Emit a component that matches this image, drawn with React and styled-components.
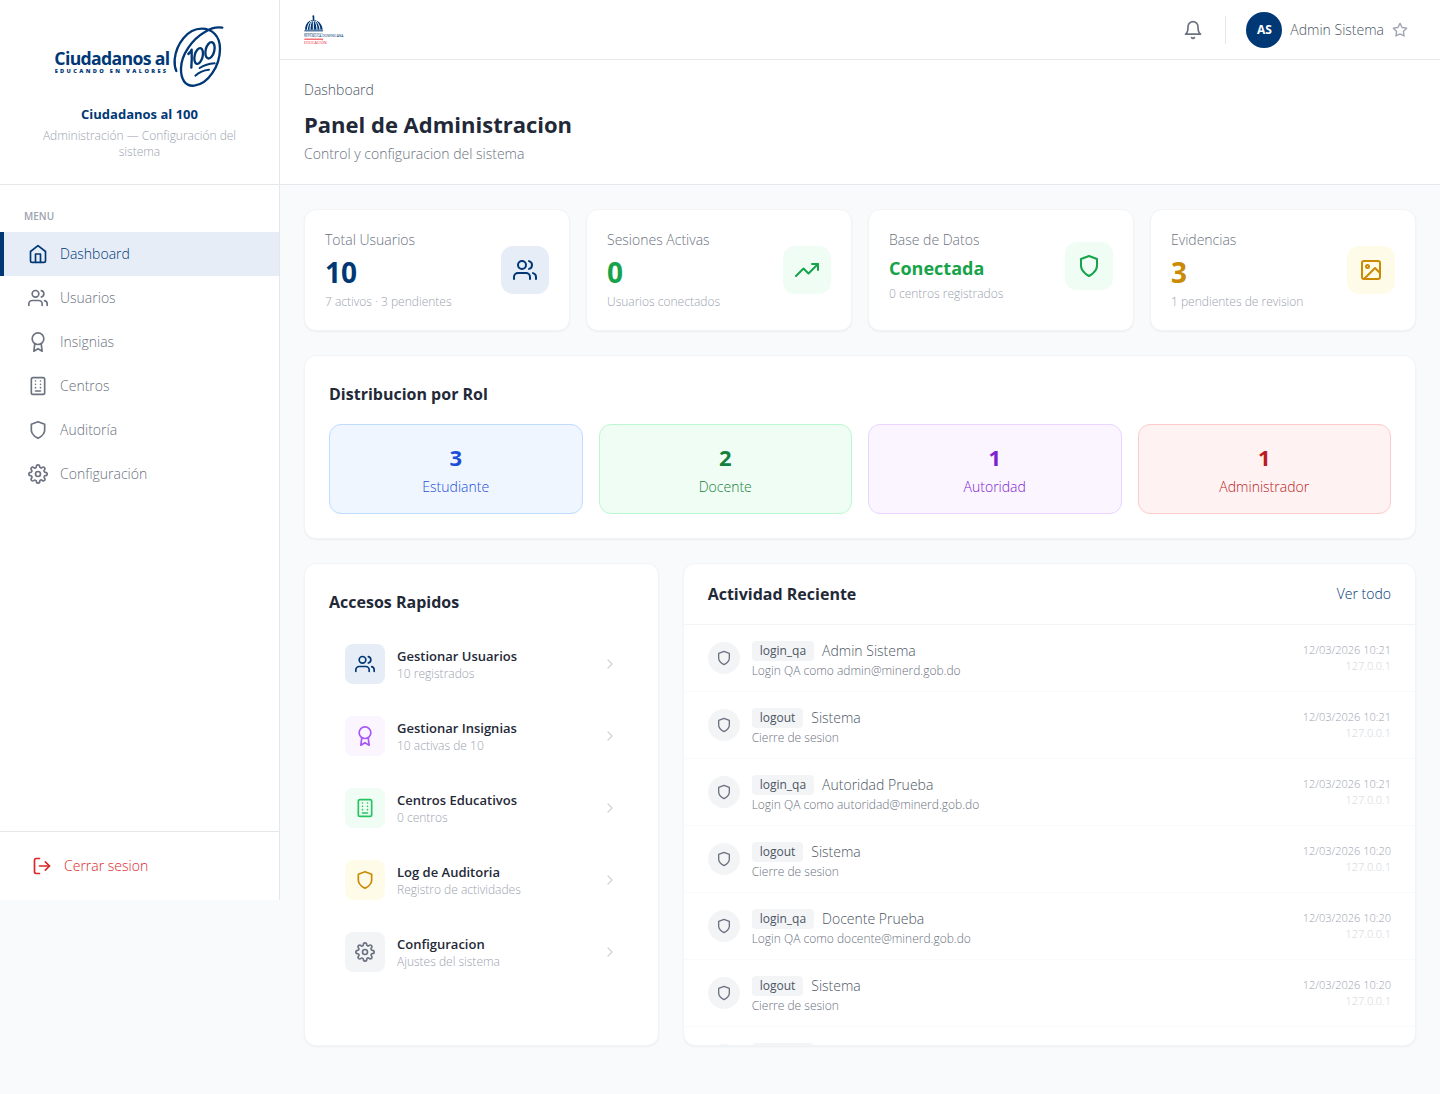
import React from "react";
import styled, { createGlobalStyle } from "styled-components";
import {
  FiAward,
  FiBell,
  FiChevronRight,
  FiHome,
  FiImage,
  FiLogOut,
  FiSettings,
  FiShield,
  FiStar,
  FiTrendingUp,
  FiUsers,
} from "react-icons/fi";

const navy = "#003876";
const line = "#e5e7eb";
const softLine = "#f3f4f6";
const gray300 = "#d1d5db";
const gray400 = "#9ca3af";
const gray500 = "#6b7280";
const gray600 = "#4b5563";
const gray800 = "#1f2937";

const tones = {
  navy: { fg: navy, bg: "#e6edf7" },
  green: { fg: "#16a34a", bg: "#f0fdf4" },
  lime: { fg: "#22c55e", bg: "#f0fdf4" },
  amber: { fg: "#ca8a04", bg: "#fefce8" },
  purple: { fg: "#a855f7", bg: "#faf5ff" },
  gray: { fg: gray500, bg: "#f3f4f6" },
};

const GlobalStyle = createGlobalStyle`
  *, *::before, *::after { box-sizing: border-box; }
  body {
    margin: 0;
    background: #f9fafb;
    color: ${gray800};
    font-family: "Open Sans", "Noto Sans", sans-serif;
    font-size: 14px;
    font-weight: 300;
    line-height: 20px;
  }
  h1, h2, h3, p, ul, dl, dd { margin: 0; padding: 0; }
  ul { list-style: none; }
  a { color: inherit; text-decoration: none; }
  button {
    border: 0;
    background: none;
    color: inherit;
    font: inherit;
    cursor: pointer;
  }
  svg { display: block; flex-shrink: 0; }
`;

const Shell = styled.div`
  display: flex;
  align-items: flex-start;
`;

const Sidebar = styled.aside`
  position: sticky;
  top: 0;
  display: flex;
  flex-direction: column;
  flex-shrink: 0;
  width: 280px;
  height: 900px;
  background: #fff;
  border-right: 1px solid ${line};
`;

const Brand = styled.div`
  display: flex;
  flex-direction: column;
  align-items: center;
  padding: 24px;
  border-bottom: 1px solid ${line};
  text-align: center;
`;

const BrandName = styled.p`
  margin-top: 16px;
  color: ${navy};
  font-size: 13px;
  font-weight: 700;
`;

const BrandNote = styled.p`
  margin-top: 4px;
  color: ${gray400};
  font-size: 12px;
  line-height: 16px;
`;

const Nav = styled.nav`
  flex: 1;
  padding-top: 24px;
`;

const NavTitle = styled.p`
  padding: 0 24px 8px;
  color: ${gray400};
  font-size: 10px;
  font-weight: 600;
  line-height: 15px;
`;

const NavLink = styled.a`
  display: flex;
  align-items: center;
  gap: 12px;
  height: 44px;
  padding: 0 24px;
  border-left: 4px solid ${(p) => (p.$active ? navy : "transparent")};
  background: ${(p) => (p.$active ? "#e6edf7" : "transparent")};
  color: ${(p) => (p.$active ? navy : gray500)};
`;

const SidebarFooter = styled.div`
  padding: 16px;
  border-top: 1px solid ${line};
`;

const LogoutButton = styled.button`
  display: flex;
  align-items: center;
  gap: 12px;
  width: 100%;
  padding: 8px 16px;
  color: #dc2626;
`;

const Content = styled.div`
  flex: 1;
  min-width: 0;
`;

const TopBar = styled.header`
  display: flex;
  align-items: center;
  justify-content: space-between;
  height: 60px;
  padding: 0 24px;
  background: #fff;
  border-bottom: 1px solid ${line};
`;

const TopActions = styled.div`
  display: flex;
  align-items: center;
  gap: 12px;
`;

const IconButton = styled.button`
  padding: 10px;
  color: ${gray500};
`;

const Divider = styled.span`
  width: 1px;
  height: 28px;
  background: ${line};
`;

const UserButton = styled.button`
  display: flex;
  align-items: center;
  gap: 8px;
  padding: 0 8px;
  color: ${gray600};

  svg { color: ${gray400}; }
`;

const Avatar = styled.span`
  display: grid;
  place-items: center;
  width: 36px;
  height: 36px;
  border-radius: 50%;
  background: ${navy};
  color: #fff;
  font-size: 12px;
  font-weight: 700;
`;

const PageHeader = styled.section`
  padding: 20px 24px;
  background: #fff;
  border-bottom: 1px solid ${line};
`;

const Crumb = styled.p`
  color: ${gray600};
`;

const PageTitle = styled.h1`
  margin-top: 8px;
  font-size: 22px;
  font-weight: 700;
  line-height: 32px;
`;

const PageNote = styled.p`
  margin-top: 4px;
  color: ${gray500};
`;

const Main = styled.main`
  display: flex;
  flex-direction: column;
  gap: 24px;
  padding: 24px 24px 48px;
`;

const Card = styled.section`
  background: #fff;
  border: 1px solid ${softLine};
  border-radius: 12px;
  box-shadow: 0 1px 2px rgba(0, 0, 0, 0.05);
`;

const StatGrid = styled.div`
  display: grid;
  grid-template-columns: repeat(4, 1fr);
  gap: 16px;
`;

const StatCard = styled(Card)`
  padding: 20px;
`;

const StatBody = styled.div`
  display: flex;
  align-items: center;
  justify-content: space-between;
`;

const StatLabel = styled.p`
  color: ${gray500};
`;

const StatValue = styled.p`
  margin-top: 4px;
  color: ${(p) => tones[p.$tone].fg};
  font-size: ${(p) => (p.$word ? 18 : 28)}px;
  font-weight: 700;
  line-height: ${(p) => (p.$word ? 28 : 36)}px;
`;

const StatNote = styled.p`
  margin-top: 4px;
  color: ${gray400};
  font-size: 12px;
  line-height: 16px;
`;

const IconTile = styled.span`
  display: grid;
  place-items: center;
  flex-shrink: 0;
  width: ${(p) => (p.$large ? 48 : 40)}px;
  height: ${(p) => (p.$large ? 48 : 40)}px;
  border-radius: ${(p) => (p.$large ? 12 : 8)}px;
  background: ${(p) => tones[p.$tone].bg};
  color: ${(p) => tones[p.$tone].fg};
`;

const PaddedCard = styled(Card)`
  padding: 24px;
`;

const CardTitle = styled.h2`
  font-size: 16px;
  font-weight: 700;
  line-height: 28px;
`;

const RoleGrid = styled.div`
  display: grid;
  grid-template-columns: repeat(4, 1fr);
  gap: 16px;
  margin-top: 16px;
`;

const RoleBox = styled.div`
  padding: 16px;
  border: 1px solid ${(p) => p.$edge};
  border-radius: 12px;
  background: ${(p) => p.$fill};
  color: ${(p) => p.$ink};
  text-align: center;
`;

const RoleCount = styled.p`
  font-size: 22px;
  font-weight: 700;
  line-height: 32px;
`;

const RoleName = styled.p`
  margin-top: 4px;
`;

const LowerGrid = styled.div`
  display: grid;
  grid-template-columns: repeat(3, 1fr);
  gap: 24px;
`;

const ShortcutList = styled.ul`
  display: flex;
  flex-direction: column;
  gap: 8px;
  margin-top: 16px;
`;

const Shortcut = styled.a`
  display: flex;
  align-items: center;
  gap: 12px;
  padding: 12px 16px;

  > svg { color: ${gray300}; }
`;

const ShortcutText = styled.span`
  display: flex;
  flex: 1;
  flex-direction: column;
`;

const ShortcutName = styled.span`
  font-size: 13px;
  font-weight: 600;
`;

const ShortcutNote = styled.span`
  color: ${gray400};
  font-size: 12px;
  line-height: 16px;
`;

const ActivityCard = styled(Card)`
  grid-column: span 2;
  overflow: hidden;
`;

const ActivityHead = styled.div`
  display: flex;
  align-items: center;
  justify-content: space-between;
  padding: 16px 24px;
  border-bottom: 1px solid ${softLine};
`;

const SeeAll = styled.a`
  color: ${navy};
`;

const ActivityList = styled.ul`
  max-height: 420px;
  overflow-y: auto;
  scrollbar-width: none;
`;

const ActivityRow = styled.li`
  display: flex;
  align-items: center;
  gap: 12px;
  padding: 12px 24px;
  border-bottom: 1px solid #f9fafb;
`;

const RoundIcon = styled.span`
  display: grid;
  place-items: center;
  flex-shrink: 0;
  width: 32px;
  height: 32px;
  border-radius: 50%;
  background: #f3f4f6;
  color: ${gray500};
`;

const ActivityText = styled.div`
  flex: 1;
  min-width: 0;
`;

const ActivityTop = styled.p`
  display: flex;
  align-items: center;
  gap: 8px;
  padding-top: 4px;
  color: ${gray600};
`;

const Tag = styled.span`
  padding: 2px 8px;
  border-radius: 4px;
  background: #f3f4f6;
  font-size: 12px;
  font-weight: 400;
  line-height: 16px;
`;

const ActivityNote = styled.p`
  margin-top: 2px;
  color: ${gray500};
  font-size: 12px;
  line-height: 16px;
`;

const ActivityMeta = styled.div`
  color: ${gray400};
  font-size: 11px;
  line-height: 16px;
  text-align: right;
`;

const Address = styled.p`
  color: ${gray300};
`;

function FiBuilding({ size = 20 }) {
  return (
    <svg
      width={size}
      height={size}
      viewBox="0 0 24 24"
      fill="none"
      stroke="currentColor"
      strokeWidth="2"
      strokeLinecap="round"
      strokeLinejoin="round"
      aria-hidden="true"
    >
      <rect x="4" y="2" width="16" height="20" rx="2" />
      <path d="M9 6h.01M15 6h.01M9 10h.01M15 10h.01M9 14h.01M15 14h.01M9 18h6" />
    </svg>
  );
}

function BrandLogo() {
  return (
    <svg width="170" height="64" viewBox="162 72 510 192" role="img" aria-label="Ciudadanos al 100">
      <g fill={navy} fontFamily="Open Sans, sans-serif" fontWeight="700">
        <text x="160" y="195" fontSize="53" letterSpacing="-2">
          Ciudadanos al
        </text>
        <text x="161" y="218" fontSize="17" fontWeight="800" letterSpacing="7">
          EDUCANDO EN VALORES
        </text>
      </g>
      <g fill="none" stroke={navy} strokeLinecap="round" strokeLinejoin="round">
        <path
          strokeWidth="7"
          d="M664 83C646 80 629 85 613 95C572 118 541 165 540 205C539 238 553 260 580 257C622 252 657 197 657 146C657 109 634 86 602 86C559 86 526 132 521 178C520 193 522 204 526 213"
        />
        <path strokeWidth="7" d="M562 162Q569 156 572 149Q573 176 571 203" />
        <ellipse cx="593" cy="168" rx="12" ry="24" strokeWidth="7" transform="rotate(14 593 168)" />
        <ellipse cx="627" cy="151" rx="13" ry="25" strokeWidth="7" transform="rotate(14 627 151)" />
        <path strokeWidth="6" d="M596 204Q615 192 641 190M583 227Q600 211 624 209" />
      </g>
    </svg>
  );
}

function MinistryLogo() {
  return (
    <svg width="42" height="32" viewBox="74 40 126 96" role="img" aria-label="Educación">
      <g fill={navy}>
        <circle cx="102" cy="47" r="3" />
        <rect x="100" y="49" width="5" height="9" />
        <path d="M77 87C78 69 88 58 102 58S128 69 130 87Z" />
        <rect x="75" y="89" width="56" height="3" />
      </g>
      <path
        d="M84 87C85 76 88 67 95 61M92 87C92 76 94 67 99 60M102 87V61M113 87C113 76 110 67 106 60M122 87C121 76 117 67 110 61"
        fill="none"
        stroke="#fff"
        strokeWidth="3"
      />
      <g fontFamily="Open Sans, sans-serif" fontWeight="400">
        <text x="74" y="101" fontSize="7" fill={navy}>
          GOBIERNO DE LA
        </text>
        <text x="74" y="110" fontSize="10" fill={navy}>
          REPÚBLICA DOMINICANA
        </text>
        <text x="74" y="131" fontSize="12" fill="#ee2a35">
          EDUCACIÓN
        </text>
      </g>
      <rect x="75" y="114" width="56" height="3" fill="#ee2a35" />
    </svg>
  );
}

const menu = [
  { label: "Dashboard", Icon: FiHome, active: true },
  { label: "Usuarios", Icon: FiUsers },
  { label: "Insignias", Icon: FiAward },
  { label: "Centros", Icon: FiBuilding },
  { label: "Auditoría", Icon: FiShield },
  { label: "Configuración", Icon: FiSettings },
];

const stats = [
  { label: "Total Usuarios", value: "10", note: "7 activos · 3 pendientes", tone: "navy", Icon: FiUsers },
  { label: "Sesiones Activas", value: "0", note: "Usuarios conectados", tone: "green", Icon: FiTrendingUp },
  { label: "Base de Datos", value: "Conectada", note: "0 centros registrados", tone: "green", Icon: FiShield, word: true },
  { label: "Evidencias", value: "3", note: "1 pendientes de revision", tone: "amber", Icon: FiImage },
];

const roles = [
  { name: "Estudiante", count: 3, ink: "#1d4ed8", fill: "#eff6ff", edge: "#bfdbfe" },
  { name: "Docente", count: 2, ink: "#15803d", fill: "#f0fdf4", edge: "#bbf7d0" },
  { name: "Autoridad", count: 1, ink: "#7e22ce", fill: "#faf5ff", edge: "#e9d5ff" },
  { name: "Administrador", count: 1, ink: "#b91c1c", fill: "#fef2f2", edge: "#fecaca" },
];

const shortcuts = [
  { name: "Gestionar Usuarios", note: "10 registrados", tone: "navy", Icon: FiUsers },
  { name: "Gestionar Insignias", note: "10 activas de 10", tone: "purple", Icon: FiAward },
  { name: "Centros Educativos", note: "0 centros", tone: "lime", Icon: FiBuilding },
  { name: "Log de Auditoria", note: "Registro de actividades", tone: "amber", Icon: FiShield },
  { name: "Configuracion", note: "Ajustes del sistema", tone: "gray", Icon: FiSettings },
];

const activity = [
  { tag: "login_qa", who: "Admin Sistema", note: "Login QA como admin@minerd.gob.do", time: "12/03/2026 10:21" },
  { tag: "logout", who: "Sistema", note: "Cierre de sesion", time: "12/03/2026 10:21" },
  { tag: "login_qa", who: "Autoridad Prueba", note: "Login QA como autoridad@minerd.gob.do", time: "12/03/2026 10:21" },
  { tag: "logout", who: "Sistema", note: "Cierre de sesion", time: "12/03/2026 10:20" },
  { tag: "login_qa", who: "Docente Prueba", note: "Login QA como docente@minerd.gob.do", time: "12/03/2026 10:20" },
  { tag: "logout", who: "Sistema", note: "Cierre de sesion", time: "12/03/2026 10:20" },
  { tag: "login_qa", who: "", note: "\u00a0", time: "" },
];

export default function App() {
  return (
    <>
      <GlobalStyle />
      <Shell>
        <Sidebar>
          <Brand>
            <BrandLogo />
            <BrandName>Ciudadanos al 100</BrandName>
            <BrandNote>Administración — Configuración del sistema</BrandNote>
          </Brand>
          <Nav>
            <NavTitle>MENU</NavTitle>
            <ul>
              {menu.map(({ label, Icon, active }) => (
                <li key={label}>
                  <NavLink href="#" $active={active} aria-current={active ? "page" : undefined}>
                    <Icon size={20} />
                    {label}
                  </NavLink>
                </li>
              ))}
            </ul>
          </Nav>
          <SidebarFooter>
            <LogoutButton type="button">
              <FiLogOut size={20} />
              Cerrar sesion
            </LogoutButton>
          </SidebarFooter>
        </Sidebar>

        <Content>
          <TopBar>
            <MinistryLogo />
            <TopActions>
              <IconButton type="button" aria-label="Notificaciones">
                <FiBell size={20} />
              </IconButton>
              <Divider />
              <UserButton type="button">
                <Avatar>AS</Avatar>
                Admin Sistema
                <FiStar size={16} />
              </UserButton>
            </TopActions>
          </TopBar>

          <PageHeader>
            <Crumb>Dashboard</Crumb>
            <PageTitle>Panel de Administracion</PageTitle>
            <PageNote>Control y configuracion del sistema</PageNote>
          </PageHeader>

          <Main>
            <StatGrid>
              {stats.map(({ label, value, note, tone, Icon, word }) => (
                <StatCard key={label}>
                  <StatBody>
                    <div>
                      <StatLabel>{label}</StatLabel>
                      <StatValue $tone={tone} $word={word}>
                        {value}
                      </StatValue>
                      <StatNote>{note}</StatNote>
                    </div>
                    <IconTile $tone={tone} $large>
                      <Icon size={24} />
                    </IconTile>
                  </StatBody>
                </StatCard>
              ))}
            </StatGrid>

            <PaddedCard>
              <CardTitle>Distribucion por Rol</CardTitle>
              <RoleGrid>
                {roles.map((r) => (
                  <RoleBox key={r.name} $ink={r.ink} $fill={r.fill} $edge={r.edge}>
                    <RoleCount>{r.count}</RoleCount>
                    <RoleName>{r.name}</RoleName>
                  </RoleBox>
                ))}
              </RoleGrid>
            </PaddedCard>

            <LowerGrid>
              <PaddedCard>
                <CardTitle>Accesos Rapidos</CardTitle>
                <ShortcutList>
                  {shortcuts.map(({ name, note, tone, Icon }) => (
                    <li key={name}>
                      <Shortcut href="#">
                        <IconTile $tone={tone}>
                          <Icon size={20} />
                        </IconTile>
                        <ShortcutText>
                          <ShortcutName>{name}</ShortcutName>
                          <ShortcutNote>{note}</ShortcutNote>
                        </ShortcutText>
                        <FiChevronRight size={16} />
                      </Shortcut>
                    </li>
                  ))}
                </ShortcutList>
              </PaddedCard>

              <ActivityCard>
                <ActivityHead>
                  <CardTitle>Actividad Reciente</CardTitle>
                  <SeeAll href="#">Ver todo</SeeAll>
                </ActivityHead>
                <ActivityList>
                  {activity.map((a, i) => (
                    <ActivityRow key={i}>
                      <RoundIcon>
                        <FiShield size={16} />
                      </RoundIcon>
                      <ActivityText>
                        <ActivityTop>
                          <Tag>{a.tag}</Tag>
                          {a.who}
                        </ActivityTop>
                        <ActivityNote>{a.note}</ActivityNote>
                      </ActivityText>
                      <ActivityMeta>
                        <p>{a.time}</p>
                        {a.time && <Address>127.0.0.1</Address>}
                      </ActivityMeta>
                    </ActivityRow>
                  ))}
                </ActivityList>
              </ActivityCard>
            </LowerGrid>
          </Main>
        </Content>
      </Shell>
    </>
  );
}
